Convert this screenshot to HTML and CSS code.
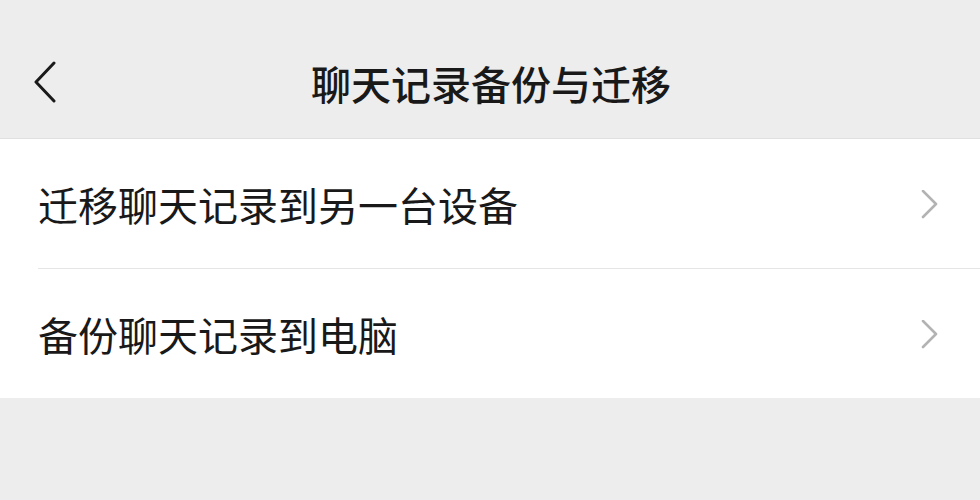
FILE: index.html
```html
<!DOCTYPE html>
<html lang="zh-CN">
<head>
  <meta charset="UTF-8" />
  <meta name="viewport" content="width=device-width, initial-scale=1.0" />
  <title>聊天记录备份与迁移</title>
  <link rel="stylesheet" href="styles.css">
</head>
<body>
  <!-- Barra superior -->
  <header class="navbar">
    <button class="back" aria-label="返回">
      <svg width="24" height="42" viewBox="0 0 24 42">
        <polyline points="20,2 2,21 20,40" fill="none" stroke="#1a1a1a" stroke-width="3" stroke-linecap="round" stroke-linejoin="round" />
      </svg>
    </button>
    <h1 class="title">聊天记录备份与迁移</h1>
  </header>

  <!-- Lista de opciones -->
  <ul class="list">
    <li class="item">
      <span class="label">迁移聊天记录到另一台设备</span>
      <svg class="arrow" width="18" height="30" viewBox="0 0 18 30">
        <polyline points="2,1 15,14 2,27" fill="none" stroke="#b3b3b3" stroke-width="2.6" stroke-linecap="round" stroke-linejoin="round" />
      </svg>
    </li>
    <li class="item">
      <span class="label">备份聊天记录到电脑</span>
      <svg class="arrow" width="18" height="30" viewBox="0 0 18 30">
        <polyline points="2,1 15,14 2,27" fill="none" stroke="#b3b3b3" stroke-width="2.6" stroke-linecap="round" stroke-linejoin="round" />
      </svg>
    </li>
  </ul>
</body>
</html>
```

FILE: styles.css
```css
/* Estilos generales */
body {
  margin: 0;
  padding: 0;
  background: #ededed;
  font-family: "Noto Sans CJK SC", "Noto Sans", sans-serif;
  color: #191919;
}
/* Barra superior */
.navbar {
  height: 138px;
  border-bottom: 1px solid #e0e0e0;
  display: flex;
  align-items: center;
  justify-content: center;
  position: relative;
}
.back {
  position: absolute;
  left: 34px;
  top: 61px;
  padding: 0;
  border: none;
  background: none;
  cursor: pointer;
  display: flex;
}
.title {
  margin: 28px 0 0 2px;
  font-size: 40px;
  font-weight: 500;
  line-height: 1;
}
/* Lista */
.list {
  list-style: none;
  margin: 0;
  padding: 0;
  background: #fff;
}
.item {
  height: 129px;
  margin-left: 38px;
  padding-right: 41px;
  display: flex;
  align-items: center;
  justify-content: space-between;
}
.item + .item {
  border-top: 1px solid #e5e5e5;
}
.label {
  font-size: 40px;
  line-height: 1;
}
.arrow {
  margin-top: 2px;
}
```
